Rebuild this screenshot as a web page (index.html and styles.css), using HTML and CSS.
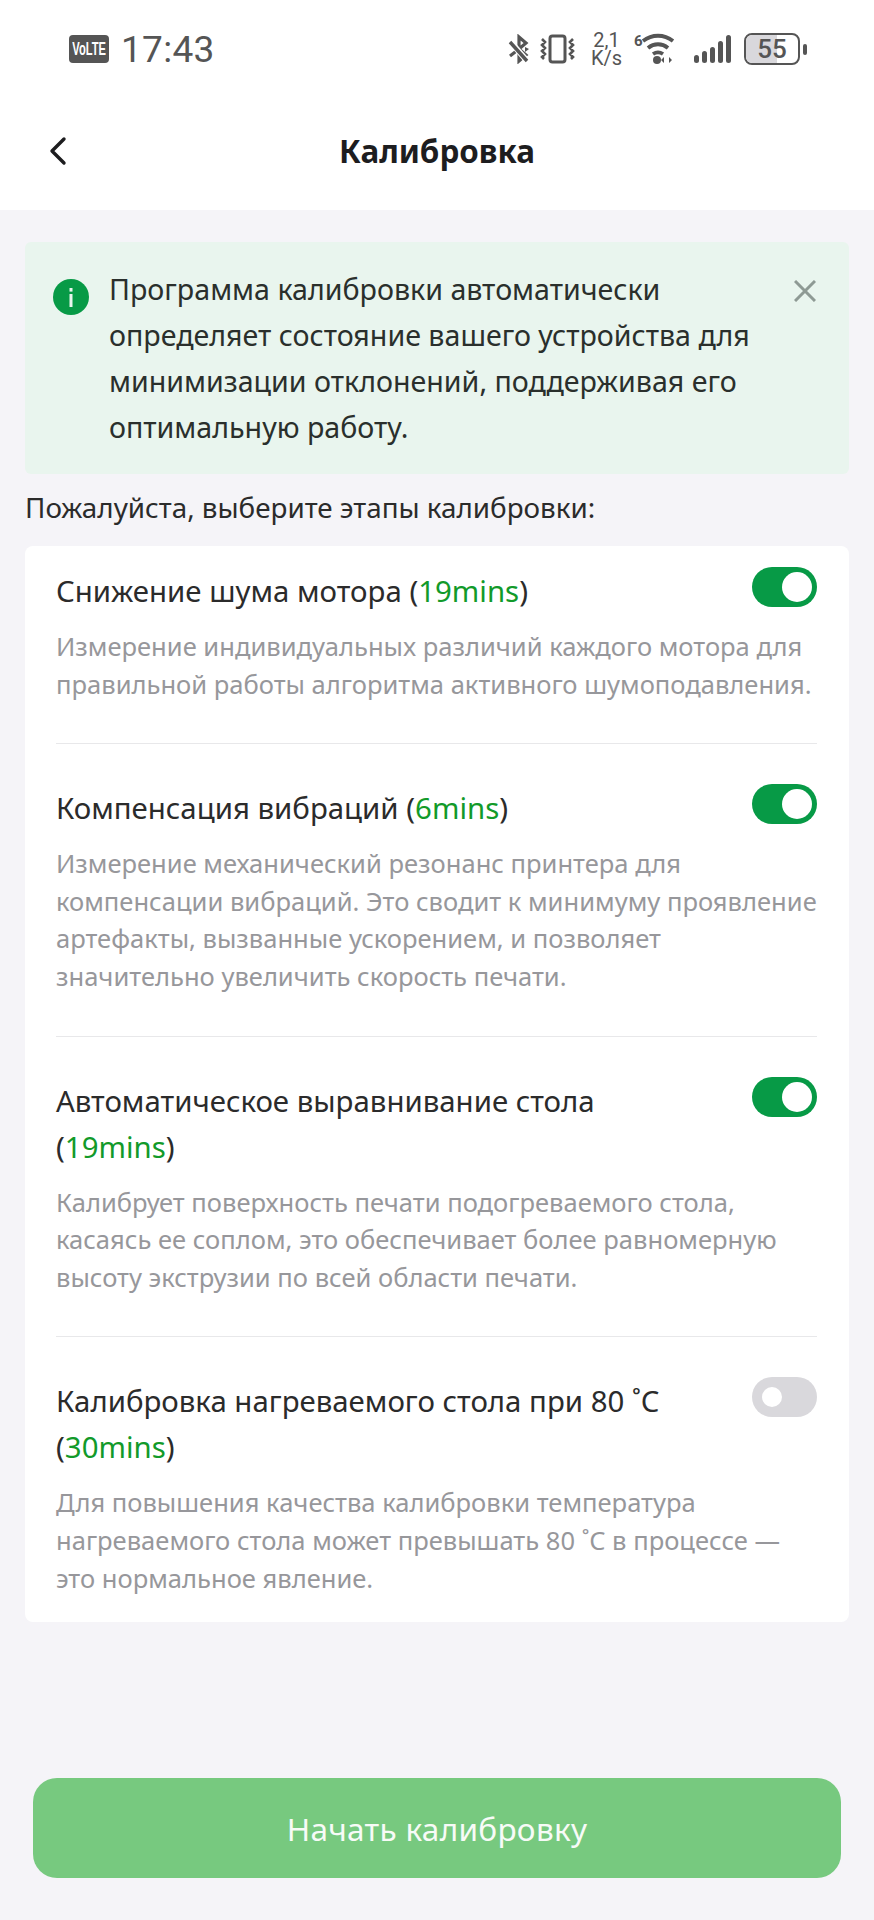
FILE: index.html
```html
<!DOCTYPE html>
<html lang="ru">
<head>
<meta charset="utf-8">
<title>Калибровка</title>
<link rel="stylesheet" href="styles.css">
</head>
<body>
<div class="page">
  <header class="top">
    <div class="status">
      <div class="status-left">
        <span class="volte"><span class="volte-text">VoLTE</span></span>
        <span class="time">17:43</span>
      </div>
      <div class="status-right">
        <svg class="ic bt" width="22" height="30" viewBox="0 0 22 30"><path d="M2 22l9-7V3l7 6-7 6v12l7-6-7-6" fill="none" stroke="#555" stroke-width="3.2"/><path d="M0 5l20 23" stroke="#fff" stroke-width="6"/><path d="M2 8l17 19" stroke="#555" stroke-width="3.4"/><path d="M17 13l4 2-4 3z" fill="#555"/></svg>
        <svg class="ic vib" width="36" height="30" viewBox="0 0 36 30"><rect x="10" y="2" width="15" height="26" rx="2.5" fill="none" stroke="#555" stroke-width="3"/><path d="M2 5l3 3-3 3 3 3-3 3 3 3-3 3 2 2M33 5l-3 3 3 3-3 3 3 3-3 3 3 3-2 2" fill="none" stroke="#555" stroke-width="2.6"/></svg>
        <div class="speed"><span>2,1</span><span>K/s</span></div>
        <svg class="ic wifi" width="42" height="32" viewBox="0 0 42 32"><text x="0" y="13" class="six">6</text><path d="M9 8c9-7 21-7 30 0M14 15c6-5 14-5 20 0M19 21c3-2 7-2 10 0" fill="none" stroke="#555" stroke-width="3.8"/><circle cx="23" cy="27" r="4" fill="#555"/><path d="M30 24v6l-3-3zM35 24v6l3-3z" fill="#555"/></svg>
        <svg class="ic sig" width="38" height="30" viewBox="0 0 38 30"><g fill="#555"><rect x="1" y="21" width="5" height="8" rx="2.5"/><rect x="9" y="17" width="5" height="12" rx="2.5"/><rect x="17" y="13" width="5" height="16" rx="2.5"/><rect x="25" y="7" width="5" height="22" rx="2.5"/><rect x="33" y="1" width="5" height="28" rx="2.5"/></g></svg>
        <div class="battery"><span class="fill"></span><span class="level">55</span></div>
        <span class="nub"></span>
      </div>
    </div>
    <div class="nav">
      <svg class="back" width="18" height="30" viewBox="0 0 18 30"><path d="M15 3L3 15l12 12" fill="none" stroke="#1d1d1f" stroke-width="3.4" stroke-linecap="round" stroke-linejoin="round"/></svg>
      <h1 class="title">Калибровка</h1>
    </div>
  </header>

  <main class="content">
    <section class="notice">
      <svg class="info" width="36" height="36" viewBox="0 0 36 36"><circle cx="18" cy="18" r="18" fill="#079a46"/><rect x="16.5" y="15" width="3" height="13" fill="#e9f5ee"/><rect x="16.5" y="9" width="3" height="3.6" fill="#e9f5ee"/></svg>
      <p class="notice-text">Программа калибровки автоматически определяет состояние вашего устройства для минимизации отклонений, поддерживая его оптимальную работу.</p>
      <svg class="close" width="22" height="22" viewBox="0 0 22 22"><path d="M1 1l20 20M21 1L1 21" stroke="#8e9a94" stroke-width="3" fill="none"/></svg>
    </section>

    <p class="label">Пожалуйста, выберите этапы калибровки:</p>

    <section class="card">
      <div class="item">
        <div class="item-head">
          <div class="item-title"><span>Снижение шума мотора</span> <span class="dur">(<em>19mins</em>)</span></div>
          <span class="toggle on"></span>
        </div>
        <p class="item-desc">Измерение индивидуальных различий каждого мотора для правильной работы алгоритма активного шумоподавления.</p>
      </div>
      <div class="item">
        <div class="item-head">
          <div class="item-title"><span>Компенсация вибраций</span> <span class="dur">(<em>6mins</em>)</span></div>
          <span class="toggle on"></span>
        </div>
        <p class="item-desc">Измерение механический резонанс принтера для компенсации вибраций. Это сводит к минимуму проявление артефакты, вызванные ускорением, и позволяет значительно увеличить скорость печати.</p>
      </div>
      <div class="item">
        <div class="item-head">
          <div class="item-title"><span>Автоматическое выравнивание стола</span> <span class="dur">(<em>19mins</em>)</span></div>
          <span class="toggle on"></span>
        </div>
        <p class="item-desc">Калибрует поверхность печати подогреваемого стола, касаясь ее соплом, это обеспечивает более равномерную высоту экструзии по всей области печати.</p>
      </div>
      <div class="item">
        <div class="item-head">
          <div class="item-title"><span>Калибровка нагреваемого стола при 80 ˚C</span> <span class="dur">(<em>30mins</em>)</span></div>
          <span class="toggle"></span>
        </div>
        <p class="item-desc">Для повышения качества калибровки температура нагреваемого стола может превышать 80 ˚C в процессе — это нормальное явление.</p>
      </div>
    </section>
  </main>

  <div class="footer">
    <button class="start" type="button">Начать калибровку</button>
  </div>
</div>
</body>
</html>
```

FILE: styles.css
```css
* { box-sizing: border-box; }
html, body { margin: 0; padding: 0; }
body {
  width: 874px;
  height: 1920px;
  background: #f5f4f8;
  font-family: "Noto Sans", "Open Sans", sans-serif;
  color: #222;
  overflow: hidden;
}
.page { height: 1920px; display: flex; flex-direction: column; }

.top { background: #fff; height: 210px; }
.status {
  height: 100px;
  display: flex;
  justify-content: space-between;
  align-items: center;
  padding: 0 67px 2px 69px;
}
.status-left, .status-right { display: flex; align-items: center; }
.volte {
  width: 40px;
  height: 28px;
  border-radius: 4px;
  background: #555;
  display: flex;
  align-items: center;
  justify-content: center;
  margin-right: 12px;
}
.volte-text {
  color: #fff;
  font-family: "Liberation Sans", sans-serif;
  font-size: 18px;
  font-weight: 700;
  display: block;
  transform: scaleX(0.62);
}
.time { font-family: Roboto, sans-serif; font-size: 37px; color: #555; letter-spacing: 0.3px; }
.ic { display: block; }
.bt { margin-right: 10px; }
.speed {
  display: flex;
  flex-direction: column;
  align-items: center;
  font-family: Roboto, sans-serif;
  font-size: 20px;
  line-height: 18px;
  color: #555;
  margin: 0 12px 0 15px;
}
.six { font-family: Roboto, sans-serif; font-size: 15px; font-weight: 700; fill: #555; }
.sig { margin: 0 13px 0 17px; }
.battery {
  position: relative;
  width: 56px;
  height: 32px;
  border: 2.5px solid #555;
  border-radius: 8px;
  overflow: hidden;
  display: flex;
  align-items: center;
  justify-content: center;
}
.fill { position: absolute; left: 0; top: 0; bottom: 0; width: 60%; background: #d9d8dc; }
.level { position: relative; font-family: Roboto, sans-serif; font-weight: 500; font-size: 26px; color: #555; }
.nub { width: 4px; height: 11px; border-radius: 2px; background: #555; margin-left: 3px; }

.nav {
  position: relative;
  height: 110px;
  padding: 0 0 10px;
  display: flex;
  align-items: center;
  justify-content: center;
}
.back { position: absolute; left: 49px; top: 36px; }
.title { margin: 0; font-size: 31.4px; font-weight: 700; color: #1d1d1f; }

.content { padding: 32px 25px 0; flex: 1; }
.notice {
  display: flex;
  align-items: flex-start;
  height: 232px;
  padding: 24px 33px 0 28px;
  background: #e9f5ee;
  border-radius: 6px;
}
.info { flex: none; margin: 13px 20px 0 0; }
.notice-text { margin: 0; width: 660px; font-size: 28.6px; line-height: 46px; color: #2a2f2c; flex: none; }
.close { flex: none; margin: 14px 0 0 auto; }
.label { margin: 10px 0 0; font-size: 27.8px; line-height: 46px; color: #2b2b2b; }
.card { margin-top: 16px; background: #fff; border-radius: 8px; padding: 0 32px 0 31px; }
.item { padding: 41px 0 40px; border-bottom: 1px solid #e8e8ea; }
.item:first-child { padding-top: 22px; }
.item:last-child { border-bottom: 0; padding-bottom: 25px; }
.item-head { display: flex; justify-content: space-between; align-items: flex-start; }
.item-title { font-size: 29.4px; line-height: 46px; color: #2b2b2b; max-width: 640px; }
.dur { white-space: nowrap; }
.item-title em { font-style: normal; color: #129a2a; }
.toggle {
  flex: none;
  position: relative;
  width: 65px;
  height: 40px;
  border-radius: 20px;
  background: #d9d8dc;
  margin-top: -1px;
}
.toggle::after {
  content: "";
  position: absolute;
  left: 10px;
  top: 10px;
  width: 20px;
  height: 20px;
  border-radius: 50%;
  background: #fff;
}
.toggle.on { background: #079a46; }
.toggle.on::after { left: 30px; top: 5px; width: 30px; height: 30px; }
.item-desc { margin: 14px 0 0; font-size: 25.55px; line-height: 37.6px; color: #97979b; }

.footer { padding: 0 33px 42px; }
.start {
  width: 100%;
  height: 100px;
  border: 0;
  border-radius: 24px;
  background: #77c97f;
  color: #f7fbf7;
  font-family: "Noto Sans", sans-serif;
  font-size: 31.5px;
  letter-spacing: 0.3px;
}
```
